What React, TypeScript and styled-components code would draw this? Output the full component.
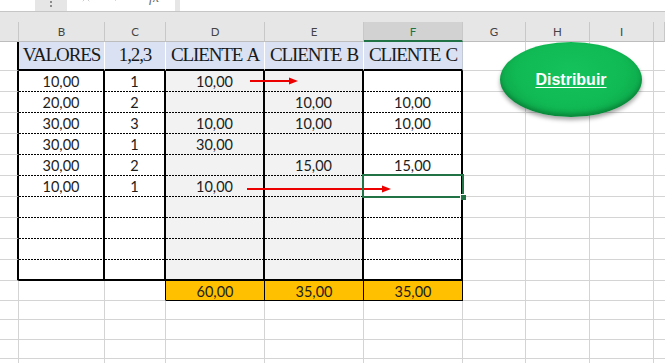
import React from 'react';
import styled, { createGlobalStyle, css } from 'styled-components';
import { X, Check } from 'lucide-react';

const GlobalStyle = createGlobalStyle`
  html, body {
    margin: 0;
    padding: 0;
    background: #fff;
  }
  body {
    width: 665px;
    height: 363px;
    overflow: hidden;
    font-family: 'Liberation Sans', Arial, sans-serif;
  }
`;

// column widths: A (cut), B, C, D, E, F, G, H, I, J (cut)
const COLS = '19px 86px 61px 99px 99px 99px 63px 64px 64px 1fr';
const BLUE = '#d9e1f2';
const SHADE = '#f2f2f2';
const GOLD = '#ffc000';
const GREEN = '#217346';

type Line = 'grid' | 'thick' | 'thin' | 'white' | 'soft' | 'none' | 'dotted';

const LINES: Record<Exclude<Line, 'dotted'>, string> = {
  grid: '1px solid #d4d4d4',
  thick: '2px solid #000',
  thin: '1px solid #000',
  white: '1px solid #ffffff',
  soft: '1px solid #c3cad6',
  none: '0',
};

const Sheet = styled.div`
  position: relative;
  width: 665px;
  height: 363px;
  overflow: hidden;
  background: #fff;
`;

const FormulaBar = styled.div`
  display: flex;
  height: 11px;
  border-bottom: 1px solid #c6c6c6;
  background: #e6e6e6;
  overflow: hidden;
`;

const NameBox = styled.div`
  width: 35px;
  background: #fff;
`;

const Grip = styled.div`
  width: 32px;
  display: flex;
  flex-direction: column;
  align-items: center;
  gap: 2px;
  padding-top: 1px;

  &::before,
  &::after {
    content: '';
    width: 2px;
    height: 2px;
    background: #8c8c8c;
  }
`;

const FormulaButtons = styled.div`
  width: 108px;
  background: #fff;
  display: flex;
  align-items: flex-start;
  padding-left: 13px;
  gap: 19px;
  box-sizing: border-box;
  color: #bcbcbc;

  svg {
    margin-top: -8px;
    flex: none;
  }
`;

const Fx = styled.span`
  margin-top: -9px;
  margin-left: 7px;
  font-family: 'Liberation Serif', serif;
  font-style: italic;
  font-size: 14px;
  color: #6b6b6b;
  line-height: 1;
`;

const FormulaInput = styled.div`
  flex: 1;
  margin-left: 5px;
  background: #fff;
`;

const Spacer = styled.div`
  height: 10px;
  background: #e6e6e6;
`;

const ColHeaders = styled.div`
  display: grid;
  grid-template-columns: ${COLS};
  height: 20px;
  background: #e6e6e6;
`;

const ColHead = styled.div<{ $active?: boolean }>`
  box-sizing: border-box;
  display: flex;
  align-items: center;
  justify-content: center;
  border-right: 1px solid #c8c8c8;
  border-bottom: ${p => (p.$active ? `2px solid ${GREEN}` : '1px solid #bdbdbd')};
  background: ${p => (p.$active ? '#d2d2d2' : '#e6e6e6')};
  color: ${p => (p.$active ? GREEN : '#444')};
  font-family: Lato, 'Liberation Sans', sans-serif;
  font-size: 11.5px;
  padding-top: ${p => (p.$active ? '1px' : '0')};
`;

const Row = styled.div<{ $h: number }>`
  display: grid;
  grid-template-columns: ${COLS};
  height: ${p => p.$h}px;
`;

const Cell = styled.div<{ $bg?: string; $right: Line; $bottom: Line; $pad?: number }>`
  position: relative;
  box-sizing: border-box;
  display: flex;
  align-items: flex-end;
  justify-content: center;
  padding-bottom: ${p => p.$pad ?? 3}px;
  background: ${p => p.$bg ?? '#fff'};
  border-right: ${p => LINES[p.$right === 'dotted' ? 'grid' : p.$right]};
  color: #1c1c1c;
  font-family: Lato, 'Liberation Sans', sans-serif;
  font-size: 14.5px;
  line-height: 15px;
  white-space: nowrap;
  ${p =>
    p.$bottom === 'dotted'
      ? css`
          &::after {
            content: '';
            position: absolute;
            left: 0;
            right: 0;
            bottom: 0;
            height: 1px;
            background: repeating-linear-gradient(90deg, #000 0 2px, transparent 2px 3px);
          }
        `
      : css`
          border-bottom: ${LINES[p.$bottom as Exclude<Line, 'dotted'>]};
        `}
`;

const HeadCell = styled(Cell)`
  align-items: flex-start;
  padding: 2px 0 0;
  font-family: 'Liberation Serif', 'Times New Roman', serif;
  font-size: 19px;
  line-height: 21px;
  letter-spacing: -1.1px;
  word-spacing: 1.5px;
  color: #1a1a1a;
`;

const Arrow = styled.svg<{ $left: number; $top: number }>`
  position: absolute;
  left: ${p => p.$left}px;
  top: ${p => p.$top}px;
  z-index: 3;
  overflow: visible;
`;

const Selection = styled.div`
  position: absolute;
  left: -2px;
  top: -2px;
  right: -3px;
  bottom: -1px;
  border: 2px solid ${GREEN};
  z-index: 4;

  &::after {
    content: '';
    position: absolute;
    right: -4px;
    bottom: -4px;
    width: 5px;
    height: 5px;
    background: ${GREEN};
    border: 1px solid #fff;
    border-right: 0;
    border-bottom: 0;
  }
`;

const OvalButton = styled.div`
  position: absolute;
  left: 500px;
  top: 42px;
  width: 142px;
  height: 75px;
  border-radius: 50%;
  display: flex;
  align-items: center;
  justify-content: center;
  background: radial-gradient(ellipse at 50% 40%, #14c25c 0%, #10b953 55%, #0ca449 80%, #077a35 100%);
  box-shadow: 0 3px 4px rgba(0, 0, 0, 0.35), inset 0 -3px 4px rgba(0, 60, 20, 0.35);
  z-index: 5;
`;

const OvalLabel = styled.span`
  color: #fff;
  font-family: 'Liberation Sans', Arial, sans-serif;
  font-weight: bold;
  font-size: 16px;
  text-decoration: underline;
  text-underline-offset: 2px;
`;

const RedArrow: React.FC<{ left: number; top: number; width: number }> = ({ left, top, width }) => (
  <Arrow $left={left} $top={top} width={width} height={8} viewBox={`0 0 ${width} 8`}>
    <line x1={0} y1={4} x2={width - 7} y2={4} stroke="#ec0000" strokeWidth={2.2} />
    <polygon points={`${width - 9},0.5 ${width},4 ${width - 9},7.5`} fill="#ec0000" />
  </Arrow>
);

const LETTERS = ['', 'B', 'C', 'D', 'E', 'F', 'G', 'H', 'I', ''];
const HEADERS = ['VALORES', '1,2,3', 'CLIENTE A', 'CLIENTE B', 'CLIENTE C'];

const DATA: string[][] = [
  ['10,00', '1', '10,00', '', ''],
  ['20,00', '2', '', '10,00', '10,00'],
  ['30,00', '3', '10,00', '10,00', '10,00'],
  ['30,00', '1', '30,00', '', ''],
  ['30,00', '2', '', '15,00', '15,00'],
  ['10,00', '1', '10,00', '', ''],
  ['', '', '', '', ''],
  ['', '', '', '', ''],
  ['', '', '', '', ''],
  ['', '', '', '', ''],
];

const TOTALS = ['60,00', '35,00', '35,00'];

const RightBlanks: React.FC = () => (
  <>
    <Cell $right="grid" $bottom="grid" />
    <Cell $right="grid" $bottom="grid" />
    <Cell $right="grid" $bottom="grid" />
    <Cell $right="none" $bottom="grid" />
  </>
);

const BlankRow: React.FC<{ h: number }> = ({ h }) => (
  <Row $h={h}>
    <Cell $right="grid" $bottom="grid" />
    {[0, 1, 2, 3, 4].map(i => (
      <Cell key={i} $right="grid" $bottom="grid" />
    ))}
    <RightBlanks />
  </Row>
);

export default function App() {
  return (
    <Sheet>
      <GlobalStyle />
      <FormulaBar>
        <NameBox />
        <Grip />
        <FormulaButtons>
          <X size={12} strokeWidth={1.5} />
          <Check size={12} strokeWidth={1.5} />
          <Fx>fx</Fx>
        </FormulaButtons>
        <FormulaInput />
      </FormulaBar>
      <Spacer />
      <ColHeaders>
        {LETTERS.map((l, i) => (
          <ColHead key={i} $active={l === 'F'}>
            {l}
          </ColHead>
        ))}
      </ColHeaders>

      <Row $h={29}>
        <Cell $right="thick" $bottom="grid" />
        {HEADERS.map((h, i) => (
          <HeadCell key={h} $bg={BLUE} $right={i === 4 ? 'soft' : 'white'} $bottom="thick">
            {h}
          </HeadCell>
        ))}
        <RightBlanks />
      </Row>

      {DATA.map((row, r) => {
        const last = r === DATA.length - 1;
        return (
          <Row key={r} $h={21}>
            <Cell $right="thick" $bottom="grid" />
            {row.map((v, c) => (
              <Cell
                key={c}
                $bg={c === 2 || c === 3 ? SHADE : '#fff'}
                $right="thick"
                $bottom={last ? 'thick' : 'dotted'}
              >
                {v}
                {c === 2 && r === 0 && <RedArrow left={84} top={6} width={48} />}
                {c === 2 && r === 5 && <RedArrow left={81} top={9} width={144} />}
                {c === 4 && r === 5 && <Selection />}
              </Cell>
            ))}
            <RightBlanks />
          </Row>
        );
      })}

      <Row $h={20}>
        <Cell $right="grid" $bottom="grid" />
        <Cell $right="grid" $bottom="grid" />
        <Cell $right="thin" $bottom="grid" />
        {TOTALS.map((t, i) => (
          <Cell key={i} $bg={GOLD} $right="thin" $bottom="thin" $pad={1}>
            {t}
          </Cell>
        ))}
        <RightBlanks />
      </Row>
      <BlankRow h={19} />
      <BlankRow h={20} />
      <BlankRow h={19} />
      <BlankRow h={20} />

      <OvalButton>
        <OvalLabel>Distribuir</OvalLabel>
      </OvalButton>
    </Sheet>
  );
}
